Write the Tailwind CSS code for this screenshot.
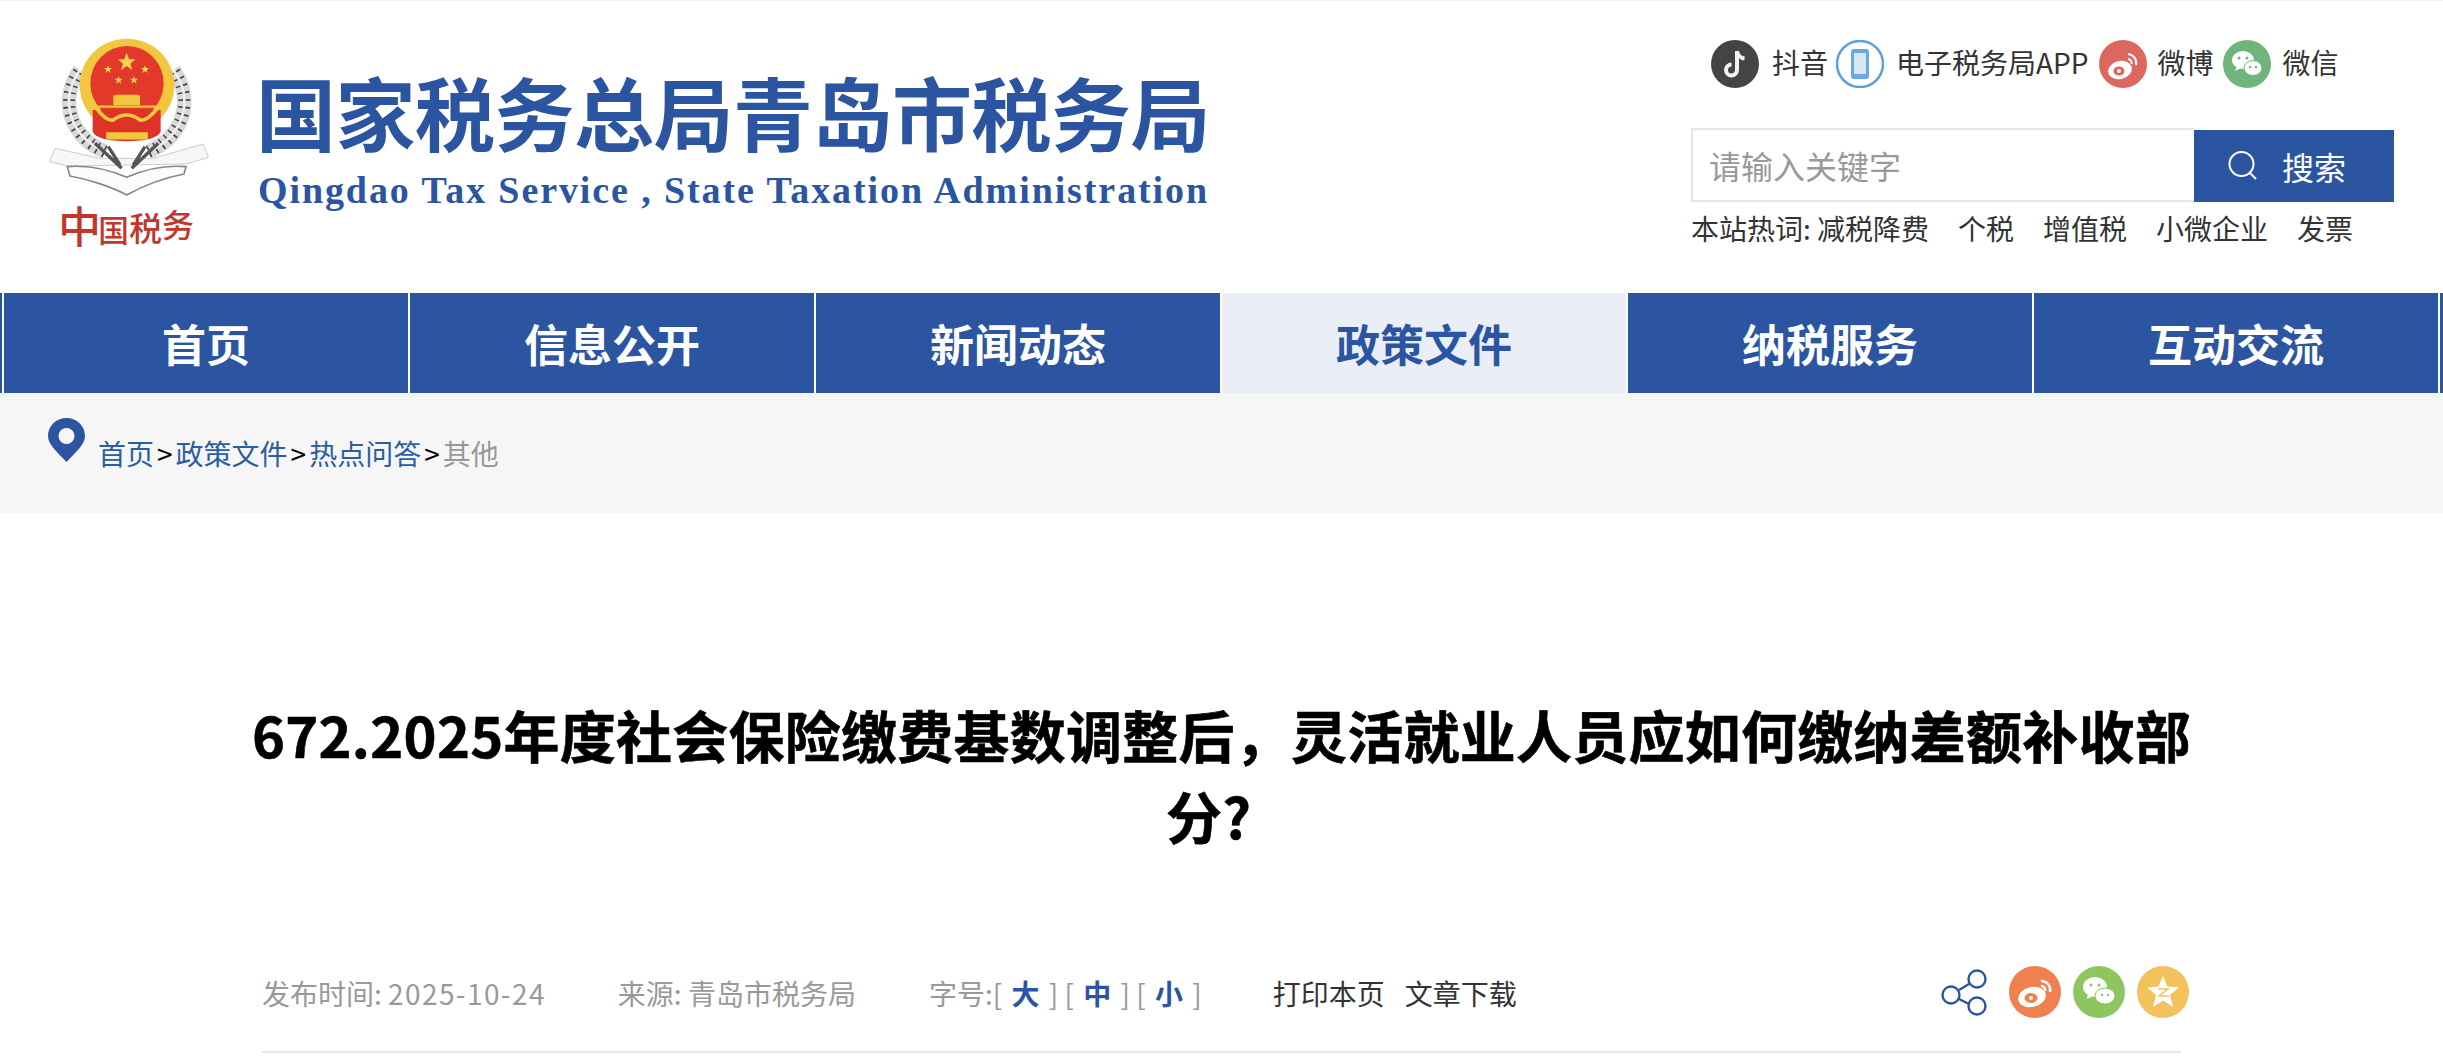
<!DOCTYPE html>
<html lang="zh-CN">
<head>
    <meta charset="UTF-8">
    <meta name="viewport" content="width=device-width, initial-scale=1.0">
    <title>国家税务总局青岛市税务局</title>
    <script src="https://cdn.jsdelivr.net/npm/@tailwindcss/browser@4"></script>
</head>
<body class="bg-white text-[#333] font-['Noto_Sans_CJK_SC',sans-serif] overflow-hidden">
    <!-- header -->
    <header class="flex h-[293px] border-t border-[#f2f2f2]">
        <svg class="ml-[30px] mt-[19px] w-[200px] h-[240px] shrink-0" viewBox="0 0 600 720">
            <!-- wreath -->
            <g fill="none">
                <path d="M225 395C120 350 85 240 150 150" stroke="#d8d8d8" stroke-width="44"/>
                <path d="M225 395C120 350 85 240 150 150" stroke="#444" stroke-width="36" stroke-dasharray="5 17"/>
                <path d="M225 395C120 350 85 240 150 150" stroke="#eee" stroke-width="8"/>
                <path d="M355 395C460 350 495 240 430 150" stroke="#d8d8d8" stroke-width="44"/>
                <path d="M355 395C460 350 495 240 430 150" stroke="#444" stroke-width="36" stroke-dasharray="5 17"/>
                <path d="M355 395C460 350 495 240 430 150" stroke="#eee" stroke-width="8"/>
            </g>
            <!-- ribbon and book -->
            <path d="M58 425L75 385 210 415 370 415 520 372 535 412 470 432 115 438Z" fill="#f7f7f7" stroke="#ccc" stroke-width="3"/>
            <path d="M112 440C180 434 245 452 290 472 335 452 400 434 468 440L462 462C400 474 335 500 290 525 245 500 175 478 120 468Z" fill="#fcfcfc" stroke="#888" stroke-width="5"/>
            <path d="M195 370L275 445M385 370L305 445M235 380L270 435M345 380L310 435" stroke="#555" stroke-width="10" fill="none"/>
            <!-- emblem -->
            <ellipse cx="291" cy="196" rx="142" ry="140" fill="#f0c73f"/>
            <ellipse cx="291" cy="190" rx="110" ry="112" fill="#e3392a"/>
            <path d="M188 270H392V335Q380 362 290 364 200 362 188 335Z" fill="#de3427"/>
            <path d="M200 266Q230 305 250 300 270 285 290 285 310 285 330 300 350 305 382 266" fill="none" stroke="#f0c73f" stroke-width="11"/>
            <path d="M205 260H378M232 340H350V355H232Z" fill="#f0c73f" stroke="#f0c73f" stroke-width="7"/>
            <path d="M250 226H330V256H250ZM258 224H322L315 238H265Z" fill="#f0c73f"/>
            <polygon points="290,98 297,118 316,118 301,131 307,150 290,138 273,150 279,131 264,118 283,118" fill="#f4d64a"/>
            <polygon points="234,136 237,144 246,144 239,150 242,159 234,153 226,159 229,150 222,144 231,144" fill="#f4d64a"/>
            <polygon points="345,136 348,144 357,144 350,150 353,159 345,153 337,159 340,150 333,144 342,144" fill="#f4d64a"/>
            <polygon points="266,168 269,176 278,176 271,182 274,191 266,185 258,191 261,182 254,176 263,176" fill="#f4d64a"/>
            <polygon points="312,168 315,176 324,176 317,182 320,191 312,185 304,191 307,182 300,176 309,176" fill="#f4d64a"/>
            <!-- calligraphy slogan -->
            <g fill="#c2362c" font-family="'Noto Sans CJK SC',sans-serif" font-weight="500">
                <text x="85" y="670" font-size="128">中</text>
                <text x="205" y="665" font-size="92">国</text>
                <text x="298" y="662" font-size="98">税</text>
                <text x="396" y="652" font-size="96">务</text>
            </g>
        </svg>
        <div class="ml-[26px] pt-[53px] text-[#2b55a1]">
            <div class="text-[80px] leading-[112px] font-bold tracking-[-0.5px] whitespace-nowrap">国家税务总局青岛市税务局</div>
            <div class="font-['Liberation_Serif',serif] text-[38px] leading-[42px] font-bold tracking-[1.9px] whitespace-nowrap mt-[3px] ml-[2px]">Qingdao Tax Service , State Taxation Administration</div>
        </div>
        <div class="ml-auto mr-[49px] w-[703px] pt-[39px]">
            <div class="flex items-center h-[48px] pl-[20px] text-[28px] leading-[48px] whitespace-nowrap">
                <svg class="w-[48px] h-[48px]" viewBox="0 0 48 48"><circle cx="24" cy="24" r="24" fill="#444"/><path d="M26 11v19a5.500 5.500 0 1 1-5.500-5.500M26 11c.5 4 3.500 7 7.500 7.500" fill="none" stroke="#f2f2f2" stroke-width="4"/></svg>
                <span class="ml-[13px] mb-[4px]">抖音</span>
                <svg class="ml-[8px] w-[48px] h-[48px]" viewBox="0 0 48 48"><circle cx="24" cy="24" r="23" fill="#fff" stroke="#5b9fdc" stroke-width="2.500"/><rect x="15" y="9" width="18" height="30" rx="3" fill="#6aa8e0"/><rect x="18" y="13" width="12" height="21" fill="#d6e8f8"/></svg>
                <span class="ml-[12px] mb-[4px]">电子税务局APP</span>
                <svg class="ml-[10px] w-[48px] h-[48px]" viewBox="0 0 48 48"><circle cx="24" cy="24" r="24" fill="#db675f"/><ellipse cx="21" cy="30" rx="12" ry="9" fill="#fff" transform="rotate(-15 21 30)"/><ellipse cx="20" cy="31" rx="5.500" ry="4.500" fill="#db675f"/><circle cx="20" cy="31" r="2" fill="#fff"/><path d="M29 14a9 9 0 0 1 8 11M29 19a4 4 0 0 1 3.500 5" fill="none" stroke="#fff" stroke-width="2"/></svg>
                <span class="ml-[11px] mb-[4px]">微博</span>
                <svg class="ml-[9px] w-[48px] h-[48px]" viewBox="0 0 48 48"><circle cx="24" cy="24" r="24" fill="#6eb47c"/><ellipse cx="20" cy="20" rx="11" ry="9" fill="#fff"/><path d="M14 26l-2 5 6-3z" fill="#fff"/><ellipse cx="30" cy="28" rx="9" ry="7.500" fill="#fff" stroke="#6eb47c"/><circle cx="16" cy="18" r="1.500" fill="#6eb47c"/><circle cx="24" cy="18" r="1.500" fill="#6eb47c"/><circle cx="27" cy="27" r="1.200" fill="#6eb47c"/><circle cx="33" cy="27" r="1.200" fill="#6eb47c"/></svg>
                <span class="ml-[12px] mb-[4px]">微信</span>
            </div>
            <div class="flex mt-[40px]">
                <div class="w-[503px] h-[74px] border-2 border-[#e5e5e5] border-r-0 pl-[16px] text-[32px] leading-[70px] text-[#999]">请输入关键字</div>
                <div class="w-[200px] h-[72px] mt-[2px] bg-[#2b55a1] flex items-center pl-[33px] text-white text-[32px]">
                    <svg class="w-[32px] h-[32px]" viewBox="0 0 32 32" fill="none" stroke="#fff" stroke-width="2"><circle cx="14.500" cy="14" r="12"/><path d="M23 23l6 6"/></svg>
                    <span class="ml-[23px]">搜索</span>
                </div>
            </div>
            <div class="flex gap-[29px] text-[28px] leading-[40px] mt-[6px] whitespace-nowrap">
                <span>本站热词: 减税降费</span><span>个税</span><span>增值税</span><span>小微企业</span><span>发票</span>
            </div>
        </div>
    </header>

    <!-- nav -->
    <nav class="flex h-[100px] bg-[#2b55a1] pl-[2px] text-white text-[44px] font-bold leading-[100px] text-center">
        <a class="w-[406px] border-l-2 border-white">首页</a>
        <a class="w-[406px] border-l-2 border-white">信息公开</a>
        <a class="w-[406px] border-l-2 border-white">新闻动态</a>
        <a class="w-[406px] border-l-2 border-white bg-[#e9eef7] text-[#2b55a1]">政策文件</a>
        <a class="w-[406px] border-l-2 border-white">纳税服务</a>
        <a class="w-[408px] border-x-2 border-white">互动交流</a>
    </nav>

    <!-- breadcrumb -->
    <div class="flex h-[120px] bg-[#f6f6f6] pl-[48px] pt-[25px]">
        <svg class="w-[37px] h-[44px]" viewBox="0 0 37 44"><path fill-rule="evenodd" d="M18.500 0C8 0 0 8 0 18c0 8 8 15 18.500 26C29 33 37 26 37 18 37 8 29 0 18.500 0ZM18.500 10a8 8 0 1 1 0 16 8 8 0 0 1 0-16Z" fill="#2b55a1"/></svg>
        <div class="ml-[13px] mt-[15px] text-[28px] leading-[40px] text-[#2b5ea1] whitespace-nowrap">首页<span class="mx-[3px] text-black">&gt;</span>政策文件<span class="mx-[3px] text-black">&gt;</span>热点问答<span class="mx-[3px] text-black">&gt;</span><span class="text-[#999]">其他</span></div>
    </div>

    <!-- article head -->
    <main class="px-[240px]">
        <h1 class="pt-[180px] text-[56px] leading-[81px] font-bold tracking-[0.25px] text-black text-center [-webkit-text-stroke:0.6px_black]">672.2025年度社会保险缴费基数调整后，灵活就业人员应如何缴纳差额补收部分?&nbsp;&nbsp;</h1>
        <div class="mx-[22px] mt-[118px] h-[80px] border-b-2 border-[#e5e5e5] flex items-start text-[28px] leading-[40px] text-[#999] whitespace-nowrap">
            <span>发布时间: <span class="tracking-[1.4px]">2025-10-24</span></span>
            <span class="ml-[72px]">来源: 青岛市税务局</span>
            <span class="ml-[73px]">字号:[ <b class="mx-[3px] text-[#2b55a1]">大</b> ] [ <b class="mx-[3px] text-[#2b55a1]">中</b> ] [ <b class="mx-[3px] text-[#2b55a1]">小</b> ]</span>
            <span class="ml-[71px] text-[#333]">打印本页</span>
            <span class="ml-[20px] text-[#333]">文章下载</span>
            <div class="ml-auto mr-[-8px] mt-[-7px] flex items-center gap-[12px]">
                <svg class="w-[48px] h-[48px] mr-[8px]" viewBox="0 0 48 48" fill="none" stroke="#2b55a1" stroke-width="2.400"><circle cx="10" cy="27" r="8.500"/><circle cx="36" cy="11" r="8.500"/><circle cx="36" cy="38" r="8.500"/><path d="M18 22l10-6M18 31l10 5"/></svg>
                <svg class="w-[52px] h-[52px]" viewBox="0 0 52 52"><circle cx="26" cy="26" r="26" fill="#f0814f"/><ellipse cx="23" cy="31" rx="14" ry="10" fill="#fff" transform="rotate(-12 23 31)"/><ellipse cx="22" cy="32" rx="6.500" ry="5" fill="#f0814f"/><circle cx="22" cy="32" r="2" fill="#fff"/><path d="M32 15a9 9 0 0 1 9 11M32 20a4 4 0 0 1 4 5" fill="none" stroke="#fff" stroke-width="2.400"/></svg>
                <svg class="w-[52px] h-[52px]" viewBox="0 0 52 52"><circle cx="26" cy="26" r="26" fill="#8dc65f"/><ellipse cx="22" cy="21" rx="12" ry="10" fill="#fff"/><path d="M15 28l-1 5 6-3z" fill="#fff"/><ellipse cx="32" cy="30" rx="10" ry="8" fill="#fff" stroke="#8dc65f"/><circle cx="18" cy="19" r="1.500" fill="#8dc65f"/><circle cx="26" cy="19" r="1.500" fill="#8dc65f"/><circle cx="29" cy="29" r="1.200" fill="#8dc65f"/><circle cx="35" cy="29" r="1.200" fill="#8dc65f"/></svg>
                <svg class="w-[52px] h-[52px]" viewBox="0 0 52 52"><circle cx="26" cy="26" r="26" fill="#f4c25c"/><polygon points="26,10 30.500,20.500 42,21.500 33,29 36,41 26,34.500 16,41 19,29 10,21.500 21.500,20.500" fill="#fff"/><path d="M21 23h10l-9 7h10" fill="none" stroke="#f4c25c" stroke-width="1.500"/></svg>
            </div>
        </div>
    </main>
</body>
</html>
